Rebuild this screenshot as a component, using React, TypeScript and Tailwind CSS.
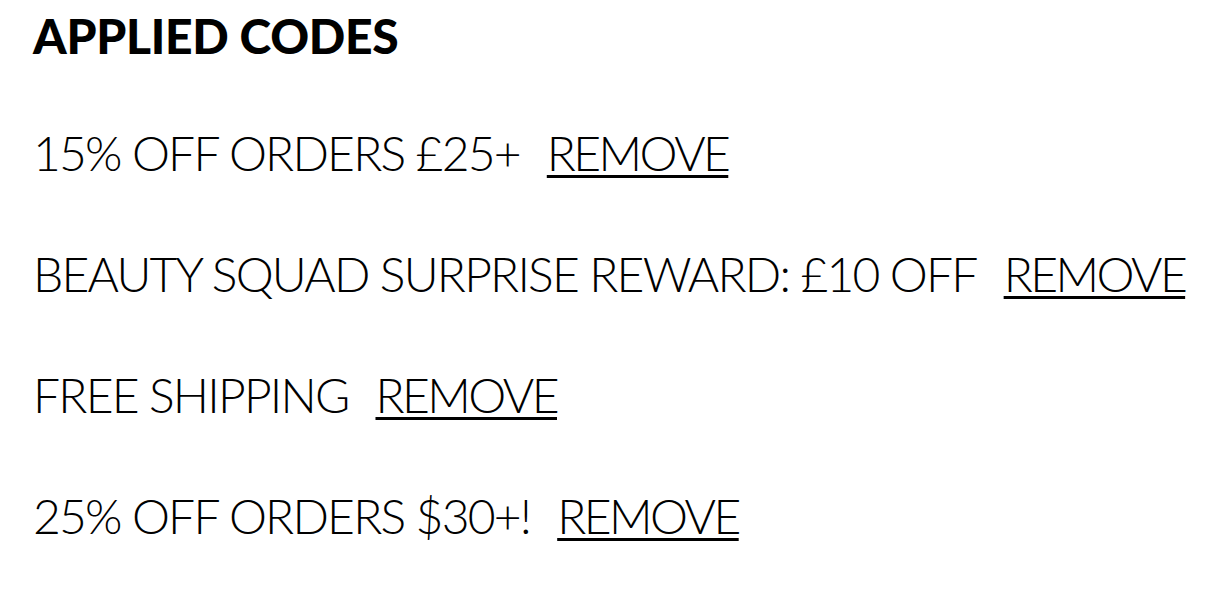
const rows = [
  "15% OFF ORDERS £25+",
  "BEAUTY SQUAD SURPRISE REWARD: £10 OFF",
  "FREE SHIPPING",
  "25% OFF ORDERS $30+!",
];

export default function App() {
  return (
    <div className="min-h-[600px] w-[1226px] bg-white text-black pl-[33px] pt-[12px] font-['Lato',sans-serif]">
      <h2 className="h-[48px] text-[48px] leading-[48px] font-black tracking-[-0.3px] whitespace-nowrap">APPLIED CODES</h2>
      <div className="mt-[69px] flex flex-col gap-[73px]">
        {rows.map((r) => (
          <div key={r} className="flex h-[48px] items-start text-[48px] leading-[48px] font-light tracking-[-1.8px] whitespace-nowrap">
            <span>{r}</span>
            <a href="#" className="ml-[27px] tracking-[-2.6px] underline decoration-[3px] underline-offset-[4px]">REMOVE</a>
          </div>
        ))}
      </div>
    </div>
  );
}
